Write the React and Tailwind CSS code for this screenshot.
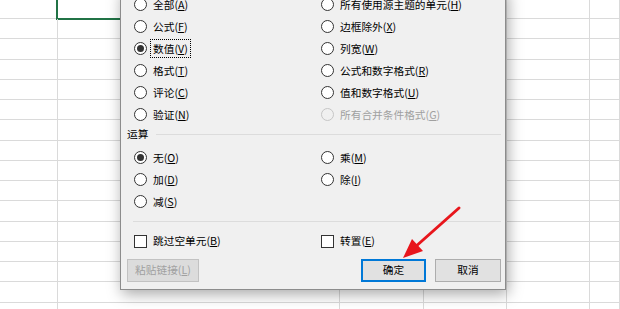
const leftOptions = [
  { label: "全部", acc: "A" },
  { label: "公式", acc: "F" },
  { label: "数值", acc: "V", checked: true, focus: true },
  { label: "格式", acc: "T" },
  { label: "评论", acc: "C" },
  { label: "验证", acc: "N" },
];

const rightOptions = [
  { label: "所有使用源主题的单元", acc: "H" },
  { label: "边框除外", acc: "X" },
  { label: "列宽", acc: "W" },
  { label: "公式和数字格式", acc: "R" },
  { label: "值和数字格式", acc: "U" },
  { label: "所有合并条件格式", acc: "G", disabled: true },
];

const colWidths = ["w-[58px]", "w-[282px]", "w-[84px]", "w-[83px]", "w-[83px]", "flex-1"];

function Radio({ label, acc, checked, disabled, focus }) {
  return (
    <div className="flex h-[22px] items-center">
      <span
        className={`flex size-[13px] shrink-0 items-center justify-center rounded-full border ${
          disabled ? "border-[#c6c6c6] bg-[#f0f0f0]" : "border-[#333333] bg-white"
        }`}
      >
        {checked && <span className="size-[7px] rounded-full bg-[#333333]" />}
      </span>
      <span
        className={`ml-[3px] whitespace-nowrap border px-[2px] leading-[17px] ${
          focus ? "border-dotted border-black" : "border-transparent"
        } ${disabled ? "text-[#a0a0a0]" : "text-black"}`}
      >
        {label}(<u>{acc}</u>)
      </span>
    </div>
  );
}

function Check({ label, acc }) {
  return (
    <div className="flex h-[22px] items-center">
      <span className="size-[13px] shrink-0 border border-[#333333] bg-white" />
      <span className="ml-[6px] whitespace-nowrap">
        {label}(<u>{acc}</u>)
      </span>
    </div>
  );
}

function Sheet() {
  return (
    <div className="-mt-[1.28px] flex flex-col">
      {Array.from({ length: 16 }).map((_, r) => (
        <div key={r} className="flex h-[20.28px] shrink-0 border-b border-[#dadada]">
          {colWidths.map((w, c) => (
            <div key={c} className={`${w} relative shrink-0 border-r border-[#dadada]`}>
              {r === 0 && c === 1 && (
                <div className="absolute -left-[2px] -top-[4px] -bottom-[2px] right-0 border-2 border-[#217346]" />
              )}
            </div>
          ))}
        </div>
      ))}
    </div>
  );
}

function Arrow() {
  return (
    <svg className="pointer-events-none absolute left-0 top-0" width="620" height="309">
      <line x1="459" y1="208" x2="414" y2="248" stroke="#e8161c" strokeWidth="3" strokeLinecap="round" />
      <polygon points="403,258 423,251 412,239" fill="#e8161c" />
    </svg>
  );
}

export default function App() {
  return (
    <div className="relative h-[309px] w-[620px] overflow-hidden bg-white font-['Noto_Sans_CJK_SC','Microsoft_YaHei',sans-serif] text-[10.7px] text-black">
      <Sheet />

      <div className="absolute left-[120px] top-[-11px] w-[386px] border border-[#8c8c8c] bg-[#f0f0f0] shadow-[2px_4px_14px_rgba(0,0,0,0.35)]">
        <div className="grid grid-cols-[187px_1fr] pl-[13px] pt-[3px]">
          <div className="flex flex-col">
            {leftOptions.map((o) => (
              <Radio key={o.acc} {...o} />
            ))}
          </div>
          <div className="flex flex-col">
            {rightOptions.map((o) => (
              <Radio key={o.acc} {...o} />
            ))}
          </div>
        </div>

        {/* 运算 */}
        <div className="flex h-[18px] items-center pl-[6px] pr-[4px]">
          <span className="whitespace-nowrap">运算</span>
          <div className="ml-[8px] h-px flex-1 bg-[#dcdcdc]" />
        </div>

        <div className="mt-[3px] grid grid-cols-[187px_1fr] pl-[13px]">
          <div className="flex flex-col">
            <Radio label="无" acc="O" checked />
            <Radio label="加" acc="D" />
            <Radio label="减" acc="S" />
          </div>
          <div className="flex flex-col">
            <Radio label="乘" acc="M" />
            <Radio label="除" acc="I" />
          </div>
        </div>

        <div className="ml-[12px] mr-[4px] mt-[9px] h-px bg-[#dcdcdc]" />

        <div className="mt-[8px] grid grid-cols-[187px_1fr] pl-[13px]">
          <Check label="跳过空单元" acc="B" />
          <Check label="转置" acc="E" />
        </div>

        <div className="mt-[7px] flex items-center pb-[7px] pl-[6px] pr-[4px]">
          <button className="h-[23px] w-[72px] border border-[#c2c2c2] bg-[#dcdcdc] text-[#a0a0a0]">
            粘贴链接(<u>L</u>)
          </button>
          <button className="ml-auto h-[23px] w-[65px] border-2 border-[#0078d7] bg-[#e1e1e1]">
            确定
          </button>
          <button className="ml-[9px] h-[23px] w-[66px] border border-[#adadad] bg-[#e1e1e1]">
            取消
          </button>
        </div>
      </div>

      <Arrow />
    </div>
  );
}
